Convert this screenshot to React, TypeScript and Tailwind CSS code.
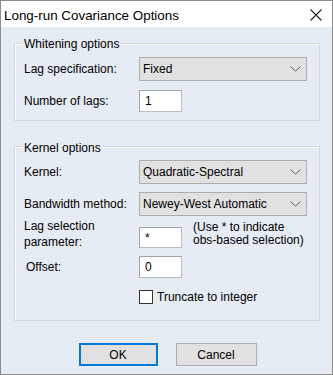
import React from "react";

const Chevron = () => (
  <svg width="11" height="6" viewBox="0 0 11 6" className="shrink-0">
    <path d="M0.5 0.5 L5.5 5 L10.5 0.5" fill="none" stroke="#606060" strokeWidth="1" />
  </svg>
);

const Select = ({ value }: { value: string }) => (
  <div className="w-[168px] h-[24px] bg-[#e1e1e1] border border-[#adadad] flex items-center justify-between pl-[3px] pr-[5px]">
    <span>{value}</span>
    <Chevron />
  </div>
);

const Input = ({ value, h = "h-[22px]" }: { value: string; h?: string }) => (
  <div className={`w-[43px] ${h} bg-white border border-[#b9bcc1] border-t-[#9ea2a8] border-l-[#9ea2a8] flex items-center pl-[5px]`}>
    {value}
  </div>
);

export default function App() {
  return (
    <div
      className="w-[333px] h-[375px] border border-[#8c8c8c] flex flex-col text-[12px] text-black bg-[#e6ecf4] overflow-hidden"
      style={{ fontFamily: '"Liberation Sans", Arial, sans-serif' }}
    >
      {/* Title bar */}
      <div className="h-[26px] bg-white flex items-center justify-between pl-[3px] pr-[10px] shrink-0">
        <span className="text-[13.4px] leading-none mt-[3px]">Long-run Covariance Options</span>
        <svg width="12" height="12" viewBox="0 0 12 12" className="mt-[2px]">
          <path d="M0.5 0.5 L11.5 11.5 M11.5 0.5 L0.5 11.5" stroke="#222" strokeWidth="1.1" fill="none" />
        </svg>
      </div>

      {/* Body */}
      <div className="flex-1 flex flex-col pl-[13px] pr-[12px]">
        {/* Whitening options */}
        <div className="relative mt-[16px] border border-[#d3d9e1] shadow-[inset_1px_1px_0_#ffffff] pt-[13px] pl-[9px] pr-[12px] pb-[8px]">
          <span className="absolute top-[-8px] left-[7px] px-[2px] bg-[#e6ecf4] leading-[16px]">Whitening options</span>
          <div className="flex items-center h-[24px]">
            <span className="w-[115px]">Lag specification:</span>
            <Select value="Fixed" />
          </div>
          <div className="flex items-center h-[22px] mt-[9px]">
            <span className="w-[115px]">Number of lags:</span>
            <Input value="1" />
          </div>
        </div>

        {/* Kernel options */}
        <div className="relative mt-[25px] border border-[#d3d9e1] shadow-[inset_1px_1px_0_#ffffff] pt-[13px] pl-[9px] pr-[12px] pb-[16px]">
          <span className="absolute top-[-7px] left-[7px] px-[2px] bg-[#e6ecf4] leading-[16px]">Kernel options</span>
          <div className="flex items-center h-[24px]">
            <span className="w-[115px]">Kernel:</span>
            <Select value="Quadratic-Spectral" />
          </div>
          <div className="flex items-center h-[24px] mt-[8px]">
            <span className="w-[115px]">Bandwidth method:</span>
            <Select value="Newey-West Automatic" />
          </div>
          <div className="flex items-start h-[32px] mt-[1px]">
            <span className="w-[115px] leading-[16px] mt-[1px]">
              Lag selection
              <br />
              parameter:
            </span>
            <div className="mt-[10px]">
              <Input value="*" h="h-[21px]" />
            </div>
            <span className="ml-[11px] mt-[4px] leading-[13px]">
              (Use * to indicate
              <br />
              obs-based selection)
            </span>
          </div>
          <div className="flex items-center h-[22px] mt-[7px]">
            <span className="w-[115px] pl-[2px]">Offset:</span>
            <Input value="0" />
          </div>
          <div className="flex items-center h-[14px] mt-[12px] pl-[115px]">
            <div className="w-[14px] h-[14px] bg-white border border-[#333333]" />
            <span className="ml-[4px]">Truncate to integer</span>
          </div>
        </div>

        {/* Buttons */}
        <div className="flex justify-center gap-[18px] mt-[22px] pl-[1px]">
          <div className="w-[79px] h-[23px] bg-[#e1e1e1] border-2 border-[#0078d7] flex items-center justify-center">
            OK
          </div>
          <div className="w-[81px] h-[23px] bg-[#e1e1e1] border border-[#adadad] flex items-center justify-center">
            Cancel
          </div>
        </div>
      </div>
    </div>
  );
}
